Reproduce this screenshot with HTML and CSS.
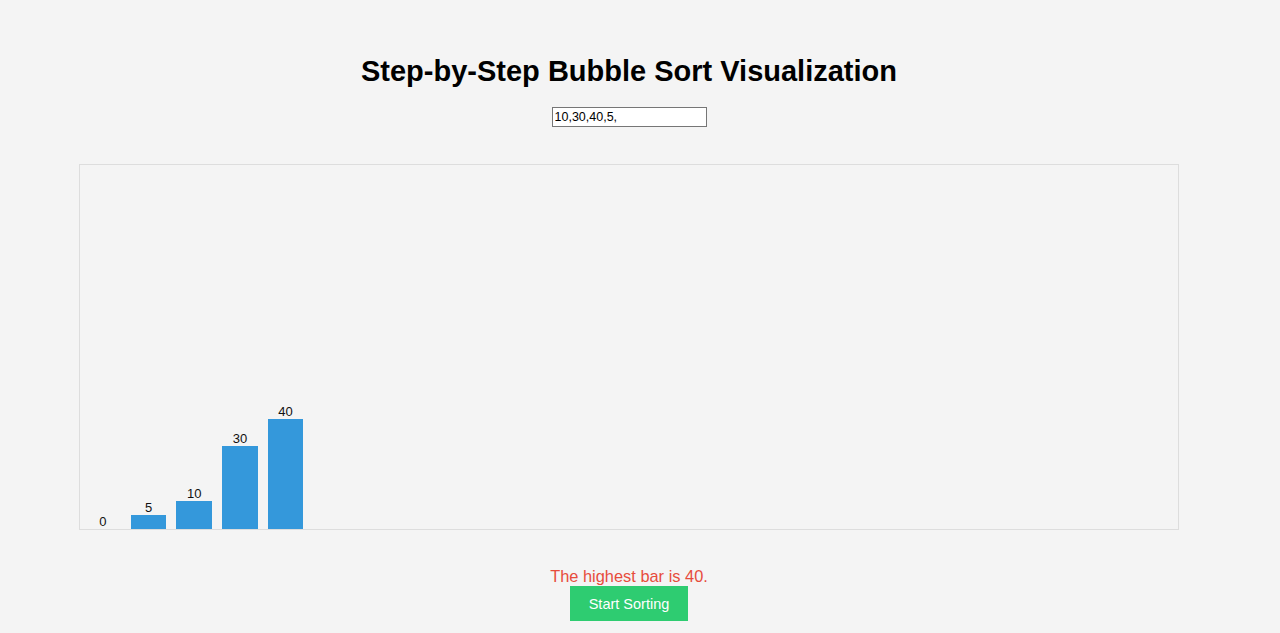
FILE: index.html
```html
<!DOCTYPE html>
<html>
<head>
<meta charset="utf-8">
<link rel="stylesheet" href="styles.css">
</head>
<body>
<div class="page">
  <h1 class="title">Step-by-Step Bubble Sort Visualization</h1>
  <div class="controls"><input class="values" type="text" value="10,30,40,5,"></div>
  <div class="chart">
    <div class="bar-col"><span class="label">0</span><div class="bar" style="height:0px"></div></div>
    <div class="bar-col"><span class="label">5</span><div class="bar" style="height:14px"></div></div>
    <div class="bar-col"><span class="label">10</span><div class="bar" style="height:28px"></div></div>
    <div class="bar-col"><span class="label">30</span><div class="bar" style="height:83px"></div></div>
    <div class="bar-col"><span class="label">40</span><div class="bar" style="height:110px"></div></div>
  </div>
  <p class="message">The highest bar is 40.</p>
  <button class="start">Start Sorting</button>
</div>
</body>
</html>
```
FILE: styles.css
```css
html, body {
  margin: 0;
  padding: 0;
  background: #f4f4f4;
}
body {
  font-family: "Liberation Sans", Arial, sans-serif;
  color: #000;
}
.page {
  width: 1258px;
  display: flex;
  flex-direction: column;
  align-items: center;
  padding-top: 54px;
}
.title {
  margin: 0;
  font-size: 29px;
  font-weight: bold;
  line-height: 34px;
}
.controls {
  margin-top: 19px;
}
.values {
  width: 155px;
  height: 20px;
  box-sizing: border-box;
  border: 1px solid #767676;
  background: #fff;
  font-family: "Liberation Sans", Arial, sans-serif;
  font-size: 12.5px;
  padding: 1px 2px;
  margin: 0;
}
.chart {
  margin-top: 37px;
  width: 1100px;
  height: 366px;
  box-sizing: border-box;
  border: 1px solid #dddddd;
  display: flex;
  align-items: flex-end;
}
.bar-col {
  width: 35.7px;
  margin: 0 5px;
  display: flex;
  flex-direction: column;
  align-items: center;
}
.label {
  font-size: 13px;
  line-height: 15px;
  color: #111;
}
.bar {
  width: 100%;
  background: #3498db;
}
.message {
  margin: 36px 0 0;
  font-size: 16.4px;
  line-height: 20px;
  color: #e74c3c;
}
.start {
  margin-top: 0;
  height: 35px;
  padding: 0 19px;
  border: none;
  background: #2ecc71;
  color: #fff;
  font-family: "Liberation Sans", Arial, sans-serif;
  font-size: 14.5px;
}
```
